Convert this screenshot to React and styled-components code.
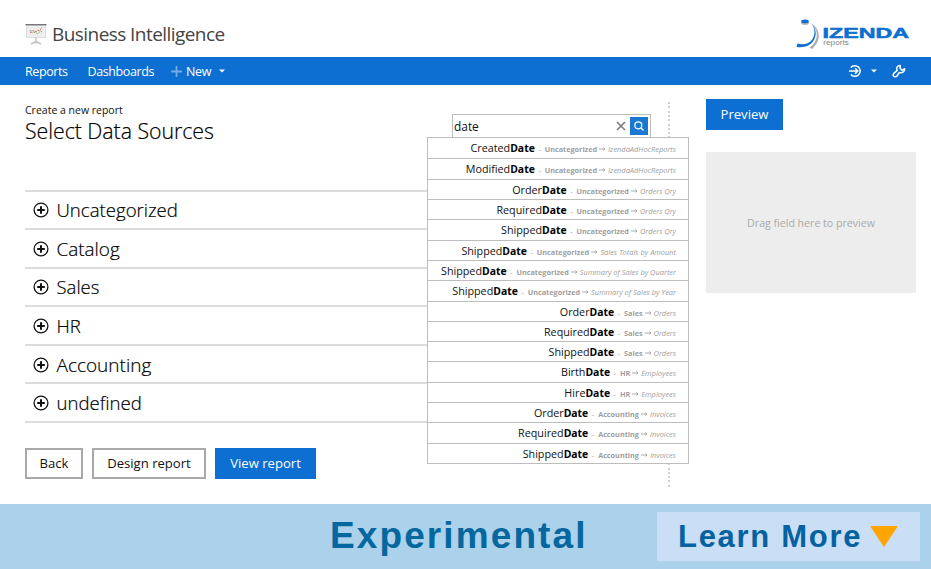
import React from "react";
import styled, { createGlobalStyle } from "styled-components";

const GlobalStyle = createGlobalStyle`
  * { box-sizing: border-box; }
  body { margin: 0; background: #fff; color: #111; font-family: "Open Sans", "Noto Sans", sans-serif; }
`;

const BLUE = "#0d6fd1";

const Page = styled.div`
  width: 931px;
  height: 569px;
  display: flex;
  flex-direction: column;
  overflow: hidden;
  white-space: nowrap;
`;
const Header = styled.header`
  height: 57px;
  flex: none;
  display: flex;
  justify-content: space-between;
  padding: 0 21px 0 25px;
`;
const Brand = styled.div`
  display: flex;
  padding-top: 22px;
  gap: 5px;
`;
const BrandName = styled.span`
  font-size: 19px;
  line-height: 24px;
  letter-spacing: -0.56px;
  color: #444;
`;
const LogoWrap = styled.div`
  padding-top: 17px;
`;
const Nav = styled.nav`
  height: 28px;
  flex: none;
  background: ${BLUE};
  color: #fff;
  display: flex;
  align-items: center;
  padding: 0 25px;
`;
const NavItem = styled.a`
  font-size: 12.5px;
  line-height: 26px;
  padding-top: 2px;
  letter-spacing: ${(p) => p.$spacing || "-0.41px"};
  margin-right: ${(p) => p.$gap || 0}px;
`;
const NavIcon = styled.svg`
  margin-right: ${(p) => p.$gap || 0}px;
  flex: none;
`;
const Spacer = styled.div`
  flex: 1;
`;
const Main = styled.main`
  height: 419px;
  flex: none;
  display: flex;
  padding-left: 25px;
`;
const Builder = styled.section`
  width: 626px;
  display: flex;
  flex-direction: column;
`;
const Top = styled.div`
  height: 104.5px;
  display: flex;
  justify-content: space-between;
`;
const Headings = styled.div`
  padding-top: 17px;
`;
const Overline = styled.div`
  font-size: 10.5px;
  line-height: 16px;
`;
const Title = styled.h1`
  margin: 0;
  font-size: 21.3px;
  font-weight: 300;
  line-height: 26px;
  letter-spacing: -0.04px;
  color: #000;
  -webkit-text-stroke: 0.2px #000;
`;
const Search = styled.div`
  position: relative;
  width: 199px;
  height: 24px;
  margin-top: 29px;
  border: 1px solid #bcbcbc;
  display: flex;
  align-items: center;
  padding: 0 2px 0 1px;
`;
const Query = styled.span`
  flex: 1;
  font-size: 11.9px;
  line-height: 20px;
`;
const SearchButton = styled.span`
  width: 18px;
  height: 18px;
  margin-left: 4px;
  background: #1a78d0;
  display: flex;
  align-items: center;
  justify-content: center;
`;
const Results = styled.ul`
  position: absolute;
  z-index: 1;
  top: 22px;
  right: -39px;
  width: 262px;
  height: 327px;
  margin: 0;
  padding: 0;
  list-style: none;
  background: #fff;
  border: 1px solid #bdbdbd;
  display: grid;
  grid-template-rows: repeat(16, 1fr);
`;
const Result = styled.li`
  display: flex;
  justify-content: flex-end;
  align-items: baseline;
  padding: 2px 12px 0 0;
  font-size: 10.75px;
  line-height: 16px;
  & + & { border-top: 1px solid #bdbdbd; }
`;
const Match = styled.b`
  font-size: 10.4px;
  color: #000;
`;
const Dash = styled.span`
  margin: 0 4px 0 3.5px;
  font-size: 7.3px;
  color: #999;
`;
const Group = styled.b`
  font-size: 7.28px;
  color: #a0a0a0;
`;
const ArrowRight = styled.svg`
  margin: 0 2px 0 2px;
`;
const Source = styled.i`
  font-size: 7.45px;
  color: #a0a0a0;
`;
const Categories = styled.div`
  height: 234px;
  display: grid;
  grid-template-rows: repeat(6, 38.6px);
  border-top: 2px solid #dcdcdc;
`;
const Category = styled.div`
  display: flex;
  align-items: center;
  gap: 7.5px;
  padding: 1px 0 0 8px;
  border-bottom: 2px solid #dcdcdc;
`;
const CategoryName = styled.span`
  font-size: ${(p) => p.$size}px;
  font-weight: 300;
  line-height: 24px;
  color: #000;
  -webkit-text-stroke: 0.2px #000;
`;
const Actions = styled.div`
  display: flex;
  gap: 9px;
  margin-top: 24.5px;
`;
const Button = styled.button`
  width: ${(p) => p.$width}px;
  height: 31px;
  padding: 0 0 1px;
  border: 2px solid ${(p) => (p.$primary ? BLUE : "#a9a9a9")};
  background: ${(p) => (p.$primary ? BLUE : "#fff")};
  color: ${(p) => (p.$primary ? "#fff" : "#111")};
  font: 13.1px/26px "Open Sans", "Noto Sans", sans-serif;
  white-space: nowrap;
`;
const Divider = styled.div`
  width: 2px;
  height: 386px;
  margin: 17px 36px 0 17px;
  background: repeating-linear-gradient(to bottom, #d0d0d0 0 2px, #fff 2px 4.3px);
`;
const Preview = styled.aside`
  width: 210px;
  padding-top: 14px;
`;
const DropZone = styled.div`
  height: 141px;
  margin-top: 22px;
  background: #ededed;
  color: #aaa;
  font-size: 10.6px;
  display: flex;
  align-items: center;
  justify-content: center;
`;
const Banner = styled.footer`
  height: 65px;
  background: #acd1ea;
  display: flex;
  justify-content: space-between;
  padding: 8px 11px 0 330px;
  font-family: "Liberation Sans", Arial, sans-serif;
  font-weight: 700;
  color: #04679f;
`;
const BannerTitle = styled.span`
  font-size: 37px;
  line-height: 48px;
  letter-spacing: 2.1px;
`;
const LearnMore = styled.a`
  width: 263px;
  height: 49px;
  background: #cadff5;
  color: #0462a2;
  font-size: 31px;
  line-height: 50px;
  letter-spacing: 1.7px;
  padding-left: 21px;
  display: flex;
  align-items: center;
  gap: 7.500px;
`;

const categories = [
  ["Uncategorized", 18.6],
  ["Catalog", 18.9],
  ["Sales", 18.5],
  ["HR", 18.5],
  ["Accounting", 19],
  ["undefined", 18.6],
];

const results = [
  ["Created", "Uncategorized", "IzendaAdHocReports"],
  ["Modified", "Uncategorized", "IzendaAdHocReports"],
  ["Order", "Uncategorized", "Orders Qry"],
  ["Required", "Uncategorized", "Orders Qry"],
  ["Shipped", "Uncategorized", "Orders Qry"],
  ["Shipped", "Uncategorized", "Sales Totals by Amount"],
  ["Shipped", "Uncategorized", "Summary of Sales by Quarter"],
  ["Shipped", "Uncategorized", "Summary of Sales by Year"],
  ["Order", "Sales", "Orders"],
  ["Required", "Sales", "Orders"],
  ["Shipped", "Sales", "Orders"],
  ["Birth", "HR", "Employees"],
  ["Hire", "HR", "Employees"],
  ["Order", "Accounting", "Invoices"],
  ["Required", "Accounting", "Invoices"],
  ["Shipped", "Accounting", "Invoices"],
];

const BoardIcon = () => (
  <svg width="22" height="24" viewBox="0 0 22 24">
    <rect x="1.5" y="3" width="19" height="12.5" fill="#eeeeee" stroke="#d8d8d8" strokeWidth=".8" />
    <rect x="0.5" y="2" width="21" height="1.4" fill="#777" />
    <path d="M11 15.5v6M11 19.5l-5 2.500M11 19.500l5 2.500" stroke="#c4c4c4" fill="none" strokeWidth="1.400" />
    <path d="M5 11l2.500-3 2.500 3 2.500-3 2 1 2.500-4" stroke="#e06c6c" fill="none" strokeDasharray="2 1" />
    <path d="M5 8l2 3 3-2.500 2.500 3.500 3-3 1.500 1" stroke="#5fae72" fill="none" strokeDasharray="1.5 1.2" />
  </svg>
);

const IzendaLogo = () => (
  <svg width="114" height="34" viewBox="0 0 114 34">
    <path d="M15 6.500C23.500 13 22.500 25 13.500 30.500L16 32C25.500 24 25 12 15 6.500z" fill="#a9adb1" />
    <path d="M14 5.500C21 11 19.500 23.500 11 26.500 8 27.600 4.500 27.400 1.500 26.600L.500 30C19 33 25.500 14 14 5.500z" fill={BLUE} />
    <ellipse cx="9" cy="5.800" rx="3.900" ry="2" fill="#a9adb1" />
    <ellipse cx="9" cy="4.300" rx="3.900" ry="1.900" fill={BLUE} />
    <text x="26.500" y="21.300" fontFamily="Liberation Sans, Arial, sans-serif" fontWeight="700" fontSize="14.500" stroke={BLUE} strokeWidth=".5" fill={BLUE} textLength="86.500" lengthAdjust="spacingAndGlyphs">IZENDA</text>
    <text x="27.300" y="28" fontFamily="Liberation Sans, Arial, sans-serif" fontSize="6.500" fill="#858585" textLength="25.500" lengthAdjust="spacingAndGlyphs">reports</text>
  </svg>
);

const Caret = ({ gap }) => (
  <NavIcon width="6" height="4" viewBox="0 0 6 4" $gap={gap}>
    <path d="M0 .5h6l-3 3z" fill="#fff" />
  </NavIcon>
);

const CirclePlus = () => (
  <svg width="16" height="16" viewBox="0 0 16 16" fill="none" stroke="#111">
    <circle cx="8" cy="8" r="6.900" strokeWidth="1.300" />
    <path d="M8 4.200v7.600M4.200 8h7.600" strokeWidth="2" />
  </svg>
);

export default function App() {
  return (
    <Page>
      <GlobalStyle />
      <Header>
        <Brand>
          <BoardIcon />
          <BrandName>Business Intelligence</BrandName>
        </Brand>
        <LogoWrap><IzendaLogo /></LogoWrap>
      </Header>
      <Nav>
        <NavItem $gap={20}>Reports</NavItem>
        <NavItem $gap={17}>Dashboards</NavItem>
        <NavIcon width="11" height="11" viewBox="0 0 11 11" $gap={4}>
          <path d="M5.500 0v11M0 5.500h11" stroke="#75ace5" strokeWidth="1.800" />
        </NavIcon>
        <NavItem $gap={8} $spacing="-0.25px">New</NavItem>
        <Caret />
        <Spacer />
        <NavIcon width="14" height="14" viewBox="0 0 14 14" $gap={9} fill="none" stroke="#fff" strokeWidth="1.500">
          <path d="M2.800 3.600A5.300 5.300 0 1 1 2.800 10.400M1 7h8.500M7 4.200L9.800 7 7 9.800" />
        </NavIcon>
        <Caret gap={15} />
        <NavIcon width="14" height="14" viewBox="0 0 24 24" $gap={0} fill="none" stroke="#fff" strokeWidth="2.600" strokeLinejoin="round">
          <path d="M14 2.500c-5 0-7.500 4.500-5 8.500L3 16c-3 4 2 8 5.500 4.500l4-6c4.500 2 9.500-1 9-6.500L17.500 11 14 7.500z" />
        </NavIcon>
      </Nav>
      <Main>
        <Builder>
          <Top>
            <Headings>
              <Overline>Create a new report</Overline>
              <Title>Select Data Sources</Title>
            </Headings>
            <Search>
              <Query>date</Query>
              <svg width="10" height="10" viewBox="0 0 10 10">
                <path d="M1 1l8 8M9 1l-8 8" stroke="#777" strokeWidth="1.500" />
              </svg>
              <SearchButton>
                <svg width="12" height="12" viewBox="0 0 12 12" fill="none" stroke="#fff" strokeWidth="1.200">
                  <circle cx="5.300" cy="5.300" r="3.500" />
                  <path d="M8 8l2.500 2.500" />
                </svg>
              </SearchButton>
              <Results>
                {results.map(([field, group, source], i) => (
                  <Result key={i}>
                    {field}<Match>Date</Match>
                    <Dash>-</Dash>
                    <Group>{group}</Group>
                    <ArrowRight width="7" height="5" viewBox="0 0 7 5">
                      <path d="M0 2h6M4.300 .5L6 2 4.300 3.500" stroke="#999" strokeWidth=".8" fill="none" />
                    </ArrowRight>
                    <Source>{source}</Source>
                  </Result>
                ))}
              </Results>
            </Search>
          </Top>
          <Categories>
            {categories.map(([name, size]) => (
              <Category key={name}>
                <CirclePlus />
                <CategoryName $size={size}>{name}</CategoryName>
              </Category>
            ))}
          </Categories>
          <Actions>
            <Button $width={58}>Back</Button>
            <Button $width={114}>Design report</Button>
            <Button $width={101} $primary>View report</Button>
          </Actions>
        </Builder>
        <Divider />
        <Preview>
          <Button $width={77} $primary>Preview</Button>
          <DropZone>Drag field here to preview</DropZone>
        </Preview>
      </Main>
      <Banner>
        <BannerTitle>Experimental</BannerTitle>
        <LearnMore>
          Learn More
          <svg width="28" height="21" viewBox="0 0 28 21"><path d="M0 0h28L14 21z" fill="#ffa500" /></svg>
        </LearnMore>
      </Banner>
    </Page>
  );
}
